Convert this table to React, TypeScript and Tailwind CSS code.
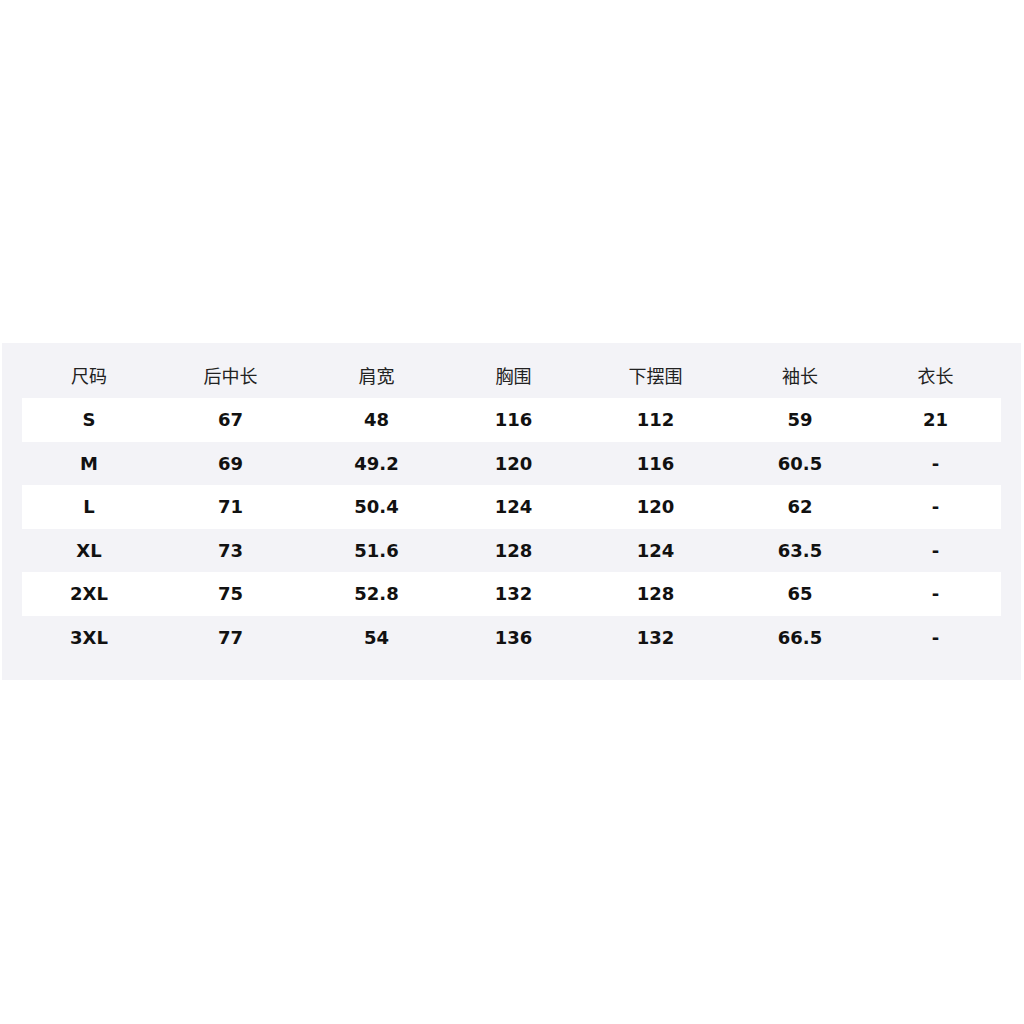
const headers = ["尺码", "后中长", "肩宽", "胸围", "下摆围", "袖长", "衣长"];

const rows = [
  ["S", "67", "48", "116", "112", "59", "21"],
  ["M", "69", "49.2", "120", "116", "60.5", "-"],
  ["L", "71", "50.4", "124", "120", "62", "-"],
  ["XL", "73", "51.6", "128", "124", "63.5", "-"],
  ["2XL", "75", "52.8", "132", "128", "65", "-"],
  ["3XL", "77", "54", "136", "132", "66.5", "-"],
];

const cols = "grid grid-cols-[134px_149px_143px_131px_153px_136px_135px] items-center";

export default function App() {
  return (
    <div className="min-h-[1024px] w-[1024px] bg-white pt-[343px]">
      <div className="ml-[2px] w-[1019px] bg-[#f3f3f7] px-5 pb-[21px] pt-3">
        <div
          className={`${cols} h-[43px] pb-[2px] text-[18px] text-[#222]`}
          style={{ fontFamily: '"Noto Sans CJK SC", "Noto Sans", sans-serif' }}
        >
          {headers.map((h) => (
            <div key={h} className="text-center">
              {h}
            </div>
          ))}
        </div>
        {rows.map((row, i) => (
          <div
            key={row[0]}
            className={`${cols} h-[43.5px] text-[18px] font-bold text-[#111] ${
              i % 2 === 0 ? "bg-white" : ""
            }`}
            style={{ fontFamily: '"DejaVu Sans", sans-serif' }}
          >
            {row.map((cell, j) => (
              <div key={j} className="text-center">
                {cell}
              </div>
            ))}
          </div>
        ))}
      </div>
    </div>
  );
}
